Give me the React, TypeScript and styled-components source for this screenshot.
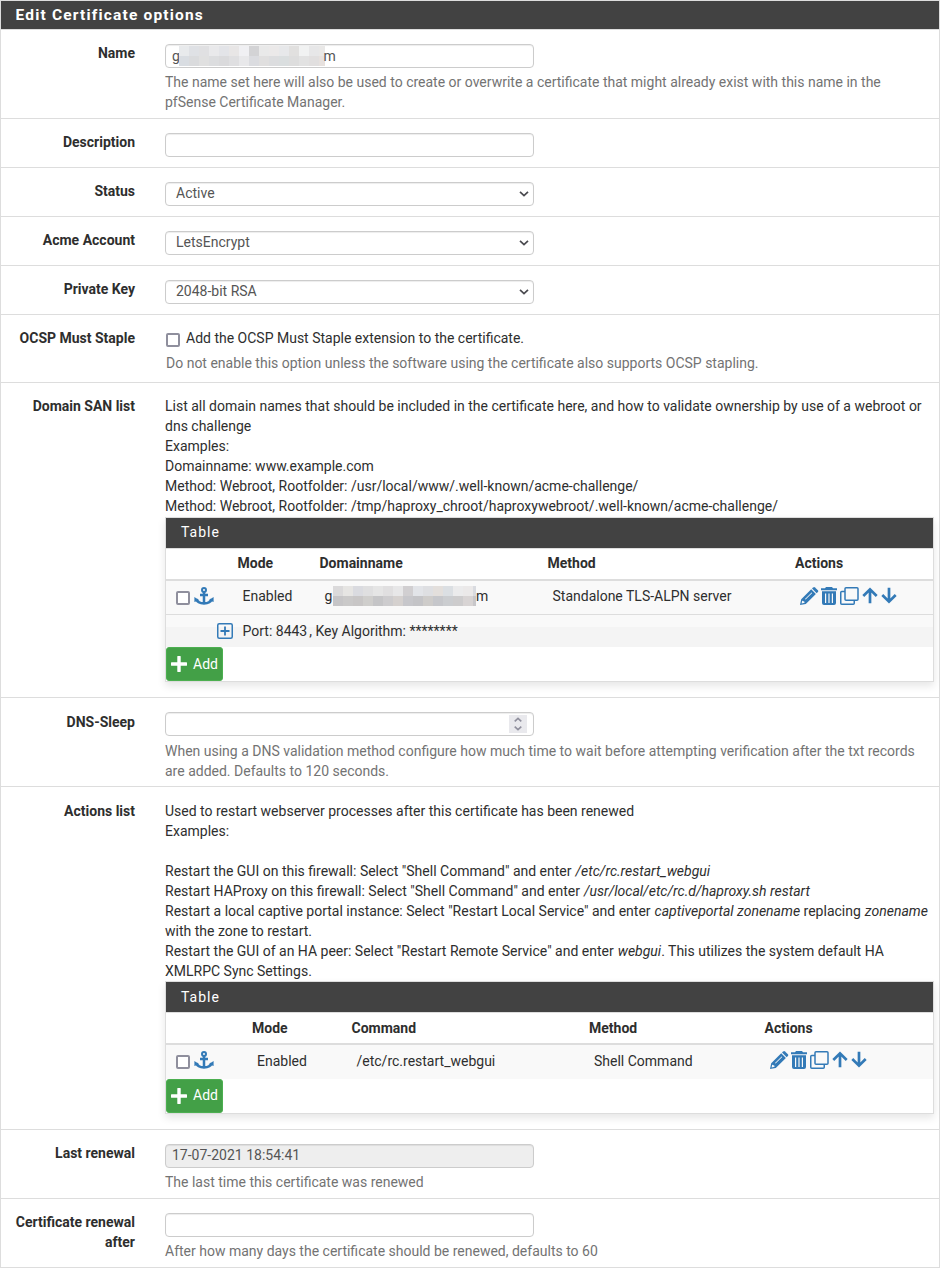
import React from 'react';
import styled, { createGlobalStyle } from 'styled-components';

const GlobalStyle = createGlobalStyle`
  *, *::before, *::after { box-sizing: border-box; }
  body {
    margin: 0;
    background: #fff;
    color: #2e2e2e;
    font: 14px/20px Roboto, "Liberation Sans", sans-serif;
  }
`;

const Panel = styled.main`
  width: 940px;
  height: 1268px;
  border: 1px solid #ddd;
  background: #fff;
`;

const PanelTitle = styled.h1`
  margin: 0;
  height: 29px;
  padding: 4px 14.5px 0;
  border-bottom: 1px solid #ddd;
  background: #424242;
  color: #fff;
  font-size: 15.5px;
  font-weight: 700;
  line-height: 20px;
  letter-spacing: 1.18px;
`;

const Row = styled.section<{ $h: number; $top?: number; $last?: boolean }>`
  display: grid;
  grid-template-columns: 134px 769px;
  column-gap: 30px;
  align-items: start;
  height: ${(p) => p.$h}px;
  padding-top: ${(p) => p.$top ?? 13}px;
  border-bottom: ${(p) => (p.$last ? '0' : '1px solid #ddd')};
`;

const Label = styled.div`
  font-weight: 700;
  text-align: right;
`;

const Body = styled.div`
  display: flex;
  flex-direction: column;
  align-items: flex-start;
`;

const Field = styled.div<{ $pad?: number; $disabled?: boolean; $flush?: boolean }>`
  display: flex;
  align-items: center;
  width: 369px;
  height: 24px;
  margin-top: ${(p) => (p.$flush ? 0 : 1)}px;
  padding: 0 ${(p) => (p.$pad ? 4 : 6)}px 0 ${(p) => p.$pad ?? 6}px;
  border: 1px solid #ccc;
  border-radius: 4px;
  background: ${(p) => (p.$disabled ? '#eee' : '#fff')};
  box-shadow: inset 0 1px 1px rgba(0, 0, 0, 0.075);
  color: #555;
  line-height: 20px;
  white-space: nowrap;
`;

const FieldText = styled.span`
  flex: 1;
  margin-top: -2px;
`;

const Help = styled.p<{ $top?: number; $indent?: number }>`
  margin: ${(p) => p.$top ?? 4}px 0 0;
  padding-left: ${(p) => p.$indent ?? 0}px;
  color: #737373;
  white-space: nowrap;
`;

const Prose = styled.p`
  margin: 0;
  white-space: nowrap;

  i {
    margin-left: 0.5px;
  }
`;

const CheckLine = styled.div`
  display: flex;
  align-items: center;
  height: 20px;
  padding-left: 1px;
  gap: 6px;
`;

const Check = styled.span`
  flex: none;
  width: 14px;
  height: 14px;
  margin-top: 4px;
  border: 2px solid #8f8f9d;
  border-radius: 2px;
  background: #fff;
`;

const Mosaic = styled.span<{ $w: number; $before: number; $after: number }>`
  display: grid;
  flex: none;
  grid-template-columns: repeat(15, 10px);
  grid-auto-rows: 10px;
  width: ${(p) => p.$w}px;
  height: 20px;
  margin: 0 ${(p) => p.$after}px 0 ${(p) => p.$before}px;
  overflow: hidden;
`;

const Tile = styled.span<{ $c: string }>`
  background: ${(p) => p.$c};
`;

const Spinner = styled.span`
  display: flex;
  align-items: center;
  justify-content: center;
  width: 18px;
  height: 18px;
  background: #e9e9ed;
`;

const TablePanel = styled.div<{ $top?: number }>`
  width: 769px;
  margin-top: ${(p) => p.$top ?? 0}px;
  border: 1px solid #ddd;
  background: #fff;
  box-shadow: 0 4px 8px rgba(0, 0, 0, 0.1);
`;

const TableTitle = styled.h2<{ $top?: number }>`
  margin: 0;
  height: 31px;
  padding: ${(p) => p.$top ?? 4}px 15px 0;
  border-bottom: 1px solid #ddd;
  background: #424242;
  color: #fff;
  font-size: 14px;
  font-weight: 400;
  letter-spacing: 1px;
`;

const TableRow = styled.div<{ $cols: string; $kind: 'head' | 'item' | 'lined'; $lift?: number }>`
  display: grid;
  grid-template-columns: ${(p) => p.$cols};
  align-items: center;
  height: ${(p) => (p.$kind === 'head' ? 32 : 34)}px;
  padding-bottom: ${(p) => p.$lift ?? 2}px;
  border-bottom: ${(p) =>
    p.$kind === 'head' ? '2px solid #ddd' : p.$kind === 'lined' ? '1px solid #ddd' : '0'};
  background: ${(p) => (p.$kind === 'head' ? '#fff' : '#f9f9f9')};
  font-weight: ${(p) => (p.$kind === 'head' ? 700 : 400)};
  white-space: nowrap;
`;

const Cell = styled.span<{ $inset?: boolean }>`
  display: flex;
  align-items: center;
  padding-left: ${(p) => (p.$inset ? 5 : 0)}px;
`;

const Handle = styled.span<{ $raised?: boolean }>`
  display: flex;
  align-items: center;
  gap: 4px;
  height: 18px;
  margin-top: ${(p) => (p.$raised ? -3 : -1)}px;
  padding-left: 10px;
`;

const DetailRow = styled.div`
  display: flex;
  align-items: center;
  gap: 9.5px;
  height: 32px;
  padding-left: 51px;
  background: linear-gradient(#f9f9f9 12px, #f4f4f4 12px);
`;

const Port = styled.span`
  margin-right: 2px;
`;

const AddButton = styled.button`
  display: flex;
  align-items: center;
  gap: 6px;
  width: 57px;
  height: 34px;
  padding: 0 0 0 4px;
  border: 1px solid #4caf50;
  border-radius: 3px;
  background: #43a047;
  color: #fff;
  font: inherit;
`;

const AddText = styled.span<{ $raised?: boolean }>`
  margin-top: ${(p) => (p.$raised ? -2 : 0)}px;
`;

const Icon = styled.svg`
  display: block;
  flex: none;
  color: #337ab7;
`;

const Caret = styled(Icon)`
  color: #4a4a4f;
`;

const nameTiles = [
  '#e8eaec', '#dfe1e5', '#e0e0e2', '#e9e9eb', '#e3e4e8', '#e8e6e6', '#f0f0f3', '#d3d3d5',
  '#e9e9e9', '#ebe9e9', '#e7e8ea', '#e1e0df', '#f1f2f2', '#e7e7e8', '#e9e8e7',
  '#d9dde2', '#dadbdd', '#e0e0e0', '#dcdddf', '#dadadc', '#dfdfe1', '#e8e8ea', '#dbdce0',
  '#e0dfdf', '#dcdddf', '#dadedf', '#dddddd', '#e2e2e2', '#e1dfdf', '#e7e1de',
];

const domainTiles = [
  '#dbdadb', '#e6e5e3', '#dadbe0', '#dfdfe0', '#e5e5e5', '#e0dfe0', '#e7e7e8', '#d1cfd1',
  '#e2e4e8', '#dedfe2', '#e3dfdc', '#dbdfe3', '#ebebec', '#ebe9e9', '#d9dbe0',
  '#c6c5c7', '#cac9c9', '#c8c6c6', '#cfcecc', '#c5c5c7', '#cdccce', '#d5d1cf', '#c7c7cb',
  '#c4c4c7', '#ceccca', '#c6c7cb', '#cbcdd0', '#cdcccd', '#d8d4d4', '#c8c7ca',
];

function Redacted({ tiles, width, before, after }: { tiles: string[]; width: number; before: number; after: number }) {
  return (
    <Mosaic $w={width} $before={before} $after={after}>
      {tiles.map((c, i) => (
        <Tile key={i} $c={c} />
      ))}
    </Mosaic>
  );
}

function Anchor() {
  return (
    <Icon width="20" height="18" viewBox="0 0 20 18" fill="none" stroke="currentColor">
      <circle cx="10" cy="3" r="2" strokeWidth="2" />
      <path d="M10 5v12M6 8h8" strokeWidth="2.5" />
      <path d="M2.4 12c.8 3 4 4.4 7.6 4.4s6.8-1.4 7.6-4.4" strokeWidth="2.6" />
      <path d="M.4 15V10l5 3.2zM19.6 15V10l-5 3.2z" fill="currentColor" stroke="none" />
    </Icon>
  );
}

function Pencil() {
  return (
    <Icon width="19" height="18" viewBox="0 0 19 18" fill="currentColor">
      <path
        fillRule="evenodd"
        d="M0 18l1.2-5.8L11.2 2.2l4.7 4.7L5.8 16.9zM2.2 13.5l-.6 2.9 3-.6-.3-1.4-1.6-.3zM5 12l.6.6 6.6-6.6-.6-.6z"
      />
      <path d="M12 1.5L13.2.4q.9-.8 1.8 0l2.9 2.8q.8.9 0 1.8l-1.2 1.2z" />
    </Icon>
  );
}

function Trash() {
  return (
    <Icon width="16" height="18" viewBox="0 0 16 18" fill="currentColor">
      <path d="M5 0h6l1 1.3h4v2H0v-2h4z" />
      <path
        fillRule="evenodd"
        d="M1 4.3h14V16q0 2-2 2H3q-2 0-2-2zM4 6.5V16h1.2V6.5zM7.4 6.5V16h1.2V6.5zM10.8 6.5V16H12V6.5z"
      />
    </Icon>
  );
}

function Clone() {
  return (
    <Icon width="19" height="18" viewBox="0 0 19 18" fill="none" stroke="currentColor" strokeWidth="1.5">
      <rect x="5" y=".75" width="13" height="12.5" rx="1" />
      <path d="M5 4.5H1.75q-1 0-1 1v10.75q0 1 1 1h11.5q1 0 1-1v-3" />
    </Icon>
  );
}

function Arrow({ down }: { down?: boolean }) {
  return (
    <Icon width="16" height="17" viewBox="0 0 16 17" fill="none" stroke="currentColor" strokeWidth="2.7">
      {down ? <path d="M8 .8v14M1.3 8L8 14.7 14.7 8" /> : <path d="M8 16.2v-14M1.3 9L8 2.3 14.7 9" />}
    </Icon>
  );
}

function Chevron() {
  return (
    <Caret width="10" height="6" viewBox="0 0 10 6">
      <path d="M1 .8l4 3.8L9 .8" fill="none" stroke="currentColor" strokeWidth="1.7" />
    </Caret>
  );
}

const Actions = styled.span<{ $raised?: boolean }>`
  display: flex;
  align-items: center;
  height: 18px;
  margin-top: ${(p) => (p.$raised ? -3 : -1)}px;
  padding-left: 5px;
  gap: 3px;

  svg:nth-child(2) {
    margin-left: -1px;
  }
`;

function RowActions({ raised }: { raised?: boolean }) {
  return (
    <Actions $raised={raised}>
      <Pencil />
      <Trash />
      <Clone />
      <Arrow />
      <Arrow down />
    </Actions>
  );
}

function Add({ raised }: { raised?: boolean }) {
  return (
    <AddButton type="button">
      <svg width="16" height="16" viewBox="0 0 16 16">
        <path d="M8 1v14M1 8h14" stroke="#fff" strokeWidth="3.4" strokeLinecap="round" />
      </svg>
      <AddText $raised={raised}>Add</AddText>
    </AddButton>
  );
}

function SelectRow({ label, value }: { label: string; value: string }) {
  return (
    <Row $h={49}>
      <Label>{label}</Label>
      <Body>
        <Field $pad={10}>
          <FieldText>{value}</FieldText>
          <Chevron />
        </Field>
      </Body>
    </Row>
  );
}

const sanCols = '71.5px 82px 228px 247.5px 1fr';
const actionCols = '86px 99.5px 237.5px 175.5px 1fr';

export default function App() {
  return (
    <>
      <GlobalStyle />
      <Panel>
        <PanelTitle>Edit Certificate options</PanelTitle>
        <Row $h={89}>
          <Label>Name</Label>
          <Body>
            <Field>
              <span>g</span>
              <Redacted tiles={nameTiles} width={146} before={-1} after={-1.5} />
              <span>m</span>
            </Field>
            <Help>
              The name set here will also be used to create or overwrite a certificate that might already exist with this name in the
              <br />
              pfSense Certificate Manager.
            </Help>
          </Body>
        </Row>
        <Row $h={49}>
          <Label>Description</Label>
          <Body>
            <Field />
          </Body>
        </Row>
        <SelectRow label="Status" value="Active" />
        <SelectRow label="Acme Account" value="LetsEncrypt" />
        <SelectRow label="Private Key" value="2048-bit RSA" />
        <Row $h={68}>
          <Label>OCSP Must Staple</Label>
          <Body>
            <CheckLine>
              <Check />
              Add the OCSP Must Staple extension to the certificate.
            </CheckLine>
            <Help $top={5} $indent={1}>
              Do not enable this option unless the software using the certificate also supports OCSP stapling.
            </Help>
          </Body>
        </Row>
        <Row $h={315}>
          <Label>Domain SAN list</Label>
          <Body>
            <Prose>
              List all domain names that should be included in the certificate here, and how to validate ownership by use of a webroot or
              <br />
              dns challenge
              <br />
              Examples:
              <br />
              Domainname: www.example.com
              <br />
              Method: Webroot, Rootfolder: /usr/local/www/.well-known/acme-challenge/
              <br />
              Method: Webroot, Rootfolder: /tmp/haproxy_chroot/haproxywebroot/.well-known/acme-challenge/
            </Prose>
            <TablePanel $top={1}>
              <TableTitle>Table</TableTitle>
              <TableRow $cols={sanCols} $kind="head">
                <span />
                <Cell>Mode</Cell>
                <Cell>Domainname</Cell>
                <Cell>Method</Cell>
                <Cell>Actions</Cell>
              </TableRow>
              <TableRow $cols={sanCols} $kind="lined" $lift={3}>
                <Handle>
                  <Check />
                  <Anchor />
                </Handle>
                <Cell $inset>Enabled</Cell>
                <Cell $inset>
                  g<Redacted tiles={domainTiles} width={143} before={0.5} after={0} />m
                </Cell>
                <Cell $inset>Standalone TLS-ALPN server</Cell>
                <RowActions />
              </TableRow>
              <DetailRow>
                <Icon width="16" height="16" viewBox="0 0 16 16" fill="none" stroke="currentColor">
                  <rect x=".75" y=".75" width="14.5" height="14.5" rx="1.5" strokeWidth="1.5" />
                  <path d="M8 3.5v9M3.5 8h9" strokeWidth="1.8" />
                </Icon>
                <span>
                  <Port>Port: 8443</Port>, Key Algorithm: ********
                </span>
              </DetailRow>
              <Add />
            </TablePanel>
          </Body>
        </Row>
        <Row $h={89} $top={14}>
          <Label>DNS-Sleep</Label>
          <Body>
            <Field $flush>
              <FieldText />
              <Spinner>
                <svg width="8" height="14" viewBox="0 0 8 14" fill="none" stroke="#8f8f9d" strokeWidth="1.6">
                  <path d="M.7 4.3L4 1.3l3.3 3M.7 9.7l3.3 3 3.3-3" />
                </svg>
              </Spinner>
            </Field>
            <Help $top={5}>
              When using a DNS validation method configure how much time to wait before attempting verification after the txt records
              <br />
              are added. Defaults to 120 seconds.
            </Help>
          </Body>
        </Row>
        <Row $h={343} $top={14}>
          <Label>Actions list</Label>
          <Body>
            <Prose>
              Used to restart webserver processes after this certificate has been renewed
              <br />
              Examples:
              <br />
              <br />
              Restart the GUI on this firewall: Select "Shell Command" and enter <i>/etc/rc.restart_webgui</i>
              <br />
              Restart HAProxy on this firewall: Select "Shell Command" and enter <i>/usr/local/etc/rc.d/haproxy.sh restart</i>
              <br />
              Restart a local captive portal instance: Select "Restart Local Service" and enter <i>captiveportal zonename</i> replacing{' '}
              <i>zonename</i>
              <br />
              with the zone to restart.
              <br />
              Restart the GUI of an HA peer: Select "Restart Remote Service" and enter <i>webgui</i>. This utilizes the system default HA
              <br />
              XMLRPC Sync Settings.
            </Prose>
            <TablePanel>
              <TableTitle $top={5}>Table</TableTitle>
              <TableRow $cols={actionCols} $kind="head" $lift={0}>
                <span />
                <Cell>Mode</Cell>
                <Cell>Command</Cell>
                <Cell>Method</Cell>
                <Cell>Actions</Cell>
              </TableRow>
              <TableRow $cols={actionCols} $kind="item" $lift={2}>
                <Handle $raised>
                  <Check />
                  <Anchor />
                </Handle>
                <Cell $inset>Enabled</Cell>
                <Cell $inset>/etc/rc.restart_webgui</Cell>
                <Cell $inset>Shell Command</Cell>
                <RowActions raised />
              </TableRow>
              <Add raised />
            </TablePanel>
          </Body>
        </Row>
        <Row $h={69}>
          <Label>Last renewal</Label>
          <Body>
            <Field $disabled>
              <FieldText>17-07-2021 18:54:41</FieldText>
            </Field>
            <Help>The last time this certificate was renewed</Help>
          </Body>
        </Row>
        <Row $h={68} $last>
          <Label>Certificate renewal after</Label>
          <Body>
            <Field />
            <Help>After how many days the certificate should be renewed, defaults to 60</Help>
          </Body>
        </Row>
      </Panel>
    </>
  );
}
